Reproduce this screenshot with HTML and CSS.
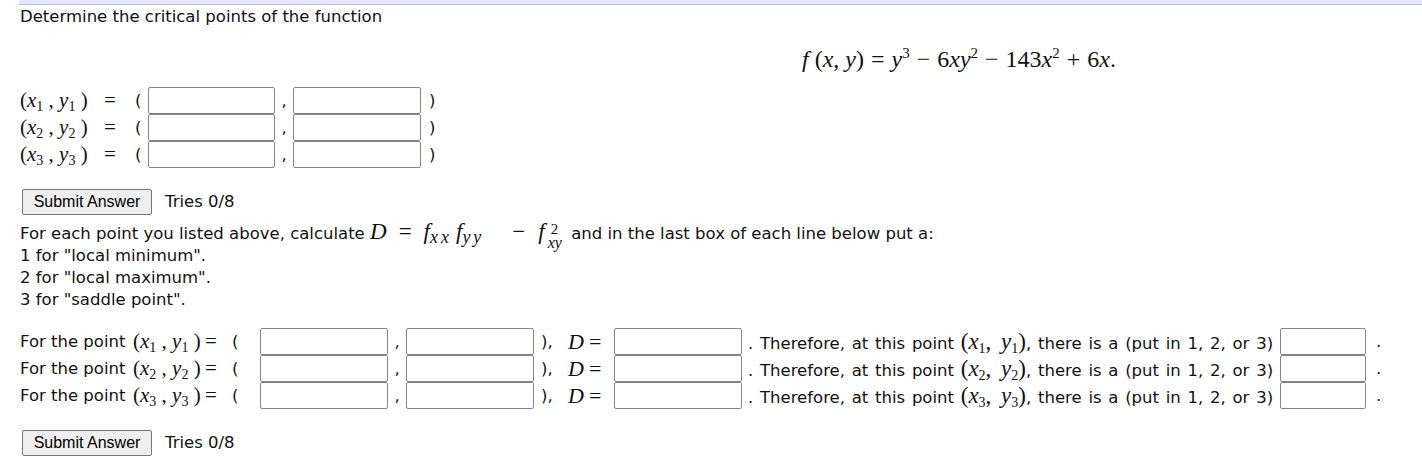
FILE: index.html
```html
<!DOCTYPE html>
<html>
<head>
<meta charset="utf-8">
<link rel="stylesheet" href="styles.css">
</head>
<body>
<div class="topbar"></div>
<div class="content">
  <p class="intro">Determine the critical points of the function</p>
  <div class="display"><span class="m"><i>f</i> (<i>x</i>, <i>y</i>)<span class="rel">=</span><i>y</i><sup>3</sup><span class="bin">−</span>6<i>xy</i><sup>2</sup><span class="bin">−</span>143<i>x</i><sup>2</sup><span class="bin">+</span>6<i>x</i>.</span></div>

  <div class="points">
    <div class="prow">
      <span class="m lbl">(<i>x</i><sub>1</sub> , <i>y</i><sub>1</sub> )</span><span class="m eq">=</span><span class="par">(</span><input class="box"><span class="comma">,</span><input class="box b2"><span class="par cl">)</span>
    </div>
    <div class="prow">
      <span class="m lbl">(<i>x</i><sub>2</sub> , <i>y</i><sub>2</sub> )</span><span class="m eq">=</span><span class="par">(</span><input class="box"><span class="comma">,</span><input class="box b2"><span class="par cl">)</span>
    </div>
    <div class="prow">
      <span class="m lbl">(<i>x</i><sub>3</sub> , <i>y</i><sub>3</sub> )</span><span class="m eq">=</span><span class="par">(</span><input class="box"><span class="comma">,</span><input class="box b2"><span class="par cl">)</span>
    </div>
  </div>

  <div class="submit"><button class="btn">Submit Answer</button><span class="tries">Tries 0/8</span></div>

  <div class="para">
    <div class="line first">For each point you listed above, calculate <span class="m dform"><i>D</i><span class="drel">=</span><i>f</i><sub class="ds"><i>xx</i></sub><i class="f2">f</i><sub class="ds"><i>yy</i></sub><span class="dbin">−</span><i>f</i><span class="supsub"><span class="sp">2</span><span class="sb"><i>xy</i></span></span></span> and in the last box of each line below put a:</div>
    <div class="line">1 for "local minimum".</div>
    <div class="line">2 for "local maximum".</div>
    <div class="line">3 for "saddle point".</div>
  </div>

  <div class="points2">
    <div class="row2">
      <span class="ftp">For the point</span><span class="m lbl2">(<i>x</i><sub>1</sub> , <i>y</i><sub>1</sub> )</span><span class="m eq2">=</span><span class="par3">(</span><input class="box w128"><span class="comma">,</span><input class="box w128"><span class="par2">),</span><span class="m dlab"><i>D</i><span class="r2">=</span></span><input class="box w128"><span class="there">. Therefore, at this point <span class="m tm">(<i>x</i><sub>1</sub>, <i>y</i><sub>1</sub>)</span>, there is a (put in 1, 2, or 3)</span><input class="box small"><span class="dot">.</span>
    </div>
    <div class="row2">
      <span class="ftp">For the point</span><span class="m lbl2">(<i>x</i><sub>2</sub> , <i>y</i><sub>2</sub> )</span><span class="m eq2">=</span><span class="par3">(</span><input class="box w128"><span class="comma">,</span><input class="box w128"><span class="par2">),</span><span class="m dlab"><i>D</i><span class="r2">=</span></span><input class="box w128"><span class="there">. Therefore, at this point <span class="m tm">(<i>x</i><sub>2</sub>, <i>y</i><sub>2</sub>)</span>, there is a (put in 1, 2, or 3)</span><input class="box small"><span class="dot">.</span>
    </div>
    <div class="row2">
      <span class="ftp">For the point</span><span class="m lbl2">(<i>x</i><sub>3</sub> , <i>y</i><sub>3</sub> )</span><span class="m eq2">=</span><span class="par3">(</span><input class="box w128"><span class="comma">,</span><input class="box w128"><span class="par2">),</span><span class="m dlab"><i>D</i><span class="r2">=</span></span><input class="box w128"><span class="there">. Therefore, at this point <span class="m tm">(<i>x</i><sub>3</sub>, <i>y</i><sub>3</sub>)</span>, there is a (put in 1, 2, or 3)</span><input class="box small"><span class="dot">.</span>
    </div>
  </div>

  <div class="submit last"><button class="btn">Submit Answer</button><span class="tries">Tries 0/8</span></div>
</div>
</body>
</html>
```
FILE: styles.css
```css
html, body {
  margin: 0;
  padding: 0;
  background: #fff;
}
body {
  font-family: "DejaVu Sans", Verdana, sans-serif;
  font-size: 16.5px;
  color: #111;
}
.topbar {
  margin-left: 19px;
  height: 4px;
  background: #e6e6fa;
  border-bottom: 1px solid #c0c0c0;
}
.content {
  padding-left: 20px;
}
.intro {
  margin: 1px 0 0 0;
  line-height: 22px;
  height: 22px;
}
.m {
  font-family: "Liberation Serif", "DejaVu Serif", serif;
  font-size: 21px;
  white-space: nowrap;
}
.m i {
  font-style: italic;
}
.m sub {
  font-size: 14px;
  vertical-align: -4px;
  line-height: 0;
}
.m sup {
  font-size: 15px;
  vertical-align: 9px;
  line-height: 0;
}
.rel {
  margin: 0 7px;
}
.bin {
  margin: 0 7px;
}
.display {
  padding-left: 782px;
  margin-top: 17px;
  height: 28px;
  line-height: 28px;
}
.display .m {
  font-size: 24px;
}
.points {
  margin-top: 14px;
  display: flex;
  flex-direction: column;
}
.prow {
  display: flex;
  align-items: center;
  height: 27px;
}
.lbl {
  width: 84px;
  flex-shrink: 0;
}
.eq {
  width: 31px;
  flex-shrink: 0;
}
.par {
  width: 13px;
  flex-shrink: 0;
}
.cl {
  margin-left: 8px;
}
.box {
  box-sizing: border-box;
  height: 27px;
  width: 127px;
  flex-shrink: 0;
  border: 1px solid #858585;
  border-radius: 2px;
  margin: 0;
  padding: 0;
  background: #fff;
}
.b2, .w128 {
  width: 128px;
}
.comma {
  width: 18px;
  flex-shrink: 0;
  text-align: center;
}
.submit {
  margin-top: 21px;
  display: flex;
  align-items: center;
  height: 26px;
}
.btn {
  font-family: "Liberation Sans", Arial, sans-serif;
  font-size: 16px;
  color: #000;
  background: #efefef;
  border: 1px solid #767676;
  border-radius: 2px;
  height: 26px;
  width: 130px;
  padding: 0;
  margin-left: 2px;
}
.tries {
  margin-left: 13px;
  line-height: 26px;
}
.para {
  margin-top: 4px;
}
.line {
  line-height: 22px;
  height: 22px;
  white-space: nowrap;
}
.line.first {
  height: 26px;
  line-height: 26px;
}
.dform {
  font-size: 23px;
}
.drel {
  margin: 0 12px;
}
.dbin {
  margin: 0 13px 0 28px;
}
.m sub.ds {
  font-size: 18px;
  letter-spacing: 3px;
}
.f2 {
  margin-left: 4px;
}
.supsub {
  display: inline-block;
  vertical-align: -9px;
  margin-left: 3px;
  margin-right: 4px;
}
.sp, .sb {
  display: block;
  font-size: 16px;
  line-height: 13px;
}
.sp {
  padding-left: 3px;
  font-size: 15px;
}
.points2 {
  margin-top: 17px;
  display: flex;
  flex-direction: column;
}
.row2 {
  display: flex;
  align-items: center;
  height: 27px;
  white-space: nowrap;
}
.ftp {
  width: 113px;
  flex-shrink: 0;
}
.lbl2 {
  width: 72px;
  flex-shrink: 0;
}
.eq2 {
  width: 27px;
  flex-shrink: 0;
}
.par3 {
  width: 28px;
  flex-shrink: 0;
}
.par2 {
  width: 34px;
  padding-left: 7px;
  box-sizing: border-box;
  flex-shrink: 0;
}
.dlab {
  width: 46px;
  flex-shrink: 0;
  font-size: 22px;
}
.r2 {
  margin-left: 5px;
}
.there {
  margin-left: 6px;
  width: 532px;
  flex-shrink: 0;
  word-spacing: 1.5px;
}
.tm {
  font-size: 23px;
  word-spacing: 4px;
}
.small {
  width: 86px;
}
.dot {
  margin-left: 10px;
}
.last {
  margin-top: 21px;
}
```
